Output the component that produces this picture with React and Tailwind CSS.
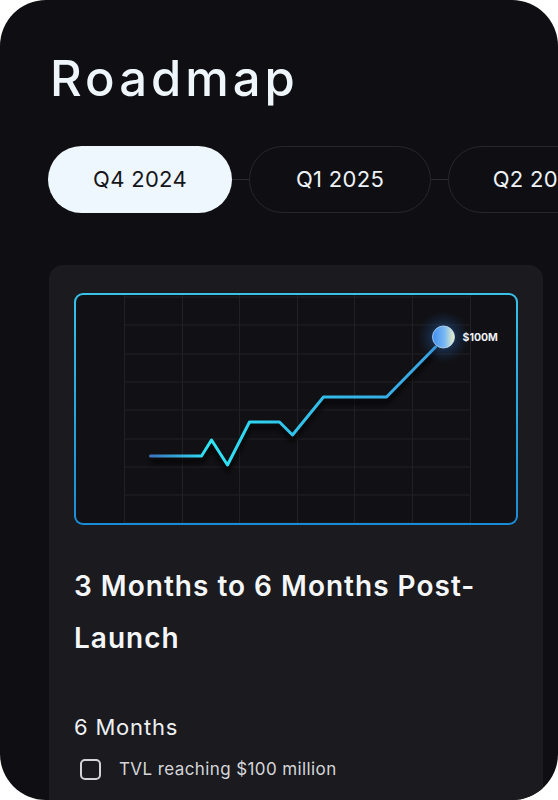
import React from "react";

const quarters = ["Q4 2024", "Q1 2025", "Q2 2025"];

function GrowthChart() {
  const vLines = [48, 106, 163, 221, 278, 336, 394];
  const hLines = [2, 30, 59, 87, 115, 144, 172, 200, 228];
  return (
    <svg viewBox="0 0 439 228" className="w-full h-full block">
      <defs>
        <linearGradient id="line" x1="74" y1="0" x2="367" y2="0" gradientUnits="userSpaceOnUse">
          <stop offset="0" stopColor="#3a74c0" />
          <stop offset="0.2" stopColor="#2ee6f6" />
          <stop offset="0.45" stopColor="#2fc6ec" />
          <stop offset="1" stopColor="#3aa2e2" />
        </linearGradient>
        <linearGradient id="dot" x1="0" y1="0" x2="1" y2="0">
          <stop offset="0" stopColor="#3f8ff0" />
          <stop offset="0.55" stopColor="#7ab8f2" />
          <stop offset="1" stopColor="#eef2c4" />
        </linearGradient>
        <radialGradient id="glow">
          <stop offset="0" stopColor="#3b8ee8" stopOpacity="0.75" />
          <stop offset="0.5" stopColor="#2a6fc8" stopOpacity="0.25" />
          <stop offset="1" stopColor="#1a4a90" stopOpacity="0" />
        </radialGradient>
        <filter id="soft" x="-10%" y="-20%" width="120%" height="140%">
          <feGaussianBlur stdDeviation="2.5" />
        </filter>
      </defs>
      {vLines.map((x) => (
        <line key={"v" + x} x1={x} y1="0" x2={x} y2="228" stroke="#202026" strokeWidth="1" />
      ))}
      {hLines.map((y) => (
        <line key={"h" + y} x1="48" y1={y} x2="394" y2={y} stroke="#202026" strokeWidth="1" />
      ))}
      {/* soft shadow under the line */}
      <polyline
        points="74,161 125,161 135,145 151,170 173,127 203,127 216,140 247,102 310,102 359,52"
        fill="none"
        stroke="#000"
        strokeOpacity="0.7"
        strokeWidth="5"
        strokeLinejoin="round"
        transform="translate(0 5)"
        filter="url(#soft)"
      />
      <polyline
        points="74,161 125,161 135,145 151,170 173,127 203,127 216,140 247,102 310,102 359,52"
        fill="none"
        stroke="url(#line)"
        strokeWidth="3"
        strokeLinecap="round"
        strokeLinejoin="round"
      />
      <circle cx="367" cy="42" r="26" fill="url(#glow)" />
      <circle cx="367" cy="42" r="11" fill="url(#dot)" stroke="#cfe4f8" strokeOpacity="0.7" strokeWidth="1" />
      <text x="386" y="46" fill="#eef2f6" fontSize="10.5" fontWeight="700" fontFamily="Inter, sans-serif">
        $100M
      </text>
    </svg>
  );
}

export default function App() {
  return (
    <div className="w-[558px] h-[800px] bg-white" style={{ fontFamily: "Inter, 'Noto Sans', sans-serif" }}>
      <div className="w-full h-full bg-[#0f0f13] rounded-[46px] overflow-hidden pl-[49px] pt-[54px]">
        <h1 className="text-[49px] leading-[49px] font-medium text-[#eef6fc] tracking-[4px] pl-[1px]">
          Roadmap
        </h1>

        {/* Quarter tabs */}
        <div className="flex items-center mt-[43px] -ml-[1px] w-[640px]">
          {quarters.map((q, i) => (
            <React.Fragment key={q}>
              {i > 0 && <div className="w-[17px] h-px bg-[#2a2a30] shrink-0" />}
              <div
                className={
                  i === 0
                    ? "shrink-0 w-[184px] h-[67px] rounded-full bg-[#eef7fd] text-[#16161a] flex items-center justify-center text-[22px] tracking-[0.3px]"
                    : "shrink-0 w-[182px] h-[67px] rounded-full border border-[#26262c] text-[#eef2f6] flex items-center justify-center text-[22px] tracking-[0.3px]"
                }
              >
                {q}
              </div>
            </React.Fragment>
          ))}
        </div>

        {/* Card */}
        <div className="mt-[52px] w-[494px] bg-[#1a1a1f] rounded-[14px] px-[25px] pt-[28px] pb-10">
          <div className="h-[232px] rounded-[9px] p-[2px] bg-gradient-to-b from-[#38c2ea] to-[#1a8cd6]">
            <div className="w-full h-full rounded-[7px] bg-[#111115] overflow-hidden">
              <GrowthChart />
            </div>
          </div>

          <h2 className="mt-[35px] text-[28px] leading-[52px] font-semibold text-[#f4f6f8] tracking-[1px]">
            3 Months to 6 Months Post-Launch
          </h2>

          <p className="mt-[49px] text-[22px] leading-[28px] text-[#eef0f2] tracking-[0.8px]">6 Months</p>

          <div className="mt-[16px] flex items-center gap-[18px] pl-[6px]">
            <div className="w-[21px] h-[21px] rounded-[5px] border-2 border-[#d4d4d8] shrink-0" />
            <span className="text-[17px] text-[#d6d6da] tracking-[0.4px]">TVL reaching $100 million</span>
          </div>
        </div>
      </div>
    </div>
  );
}
